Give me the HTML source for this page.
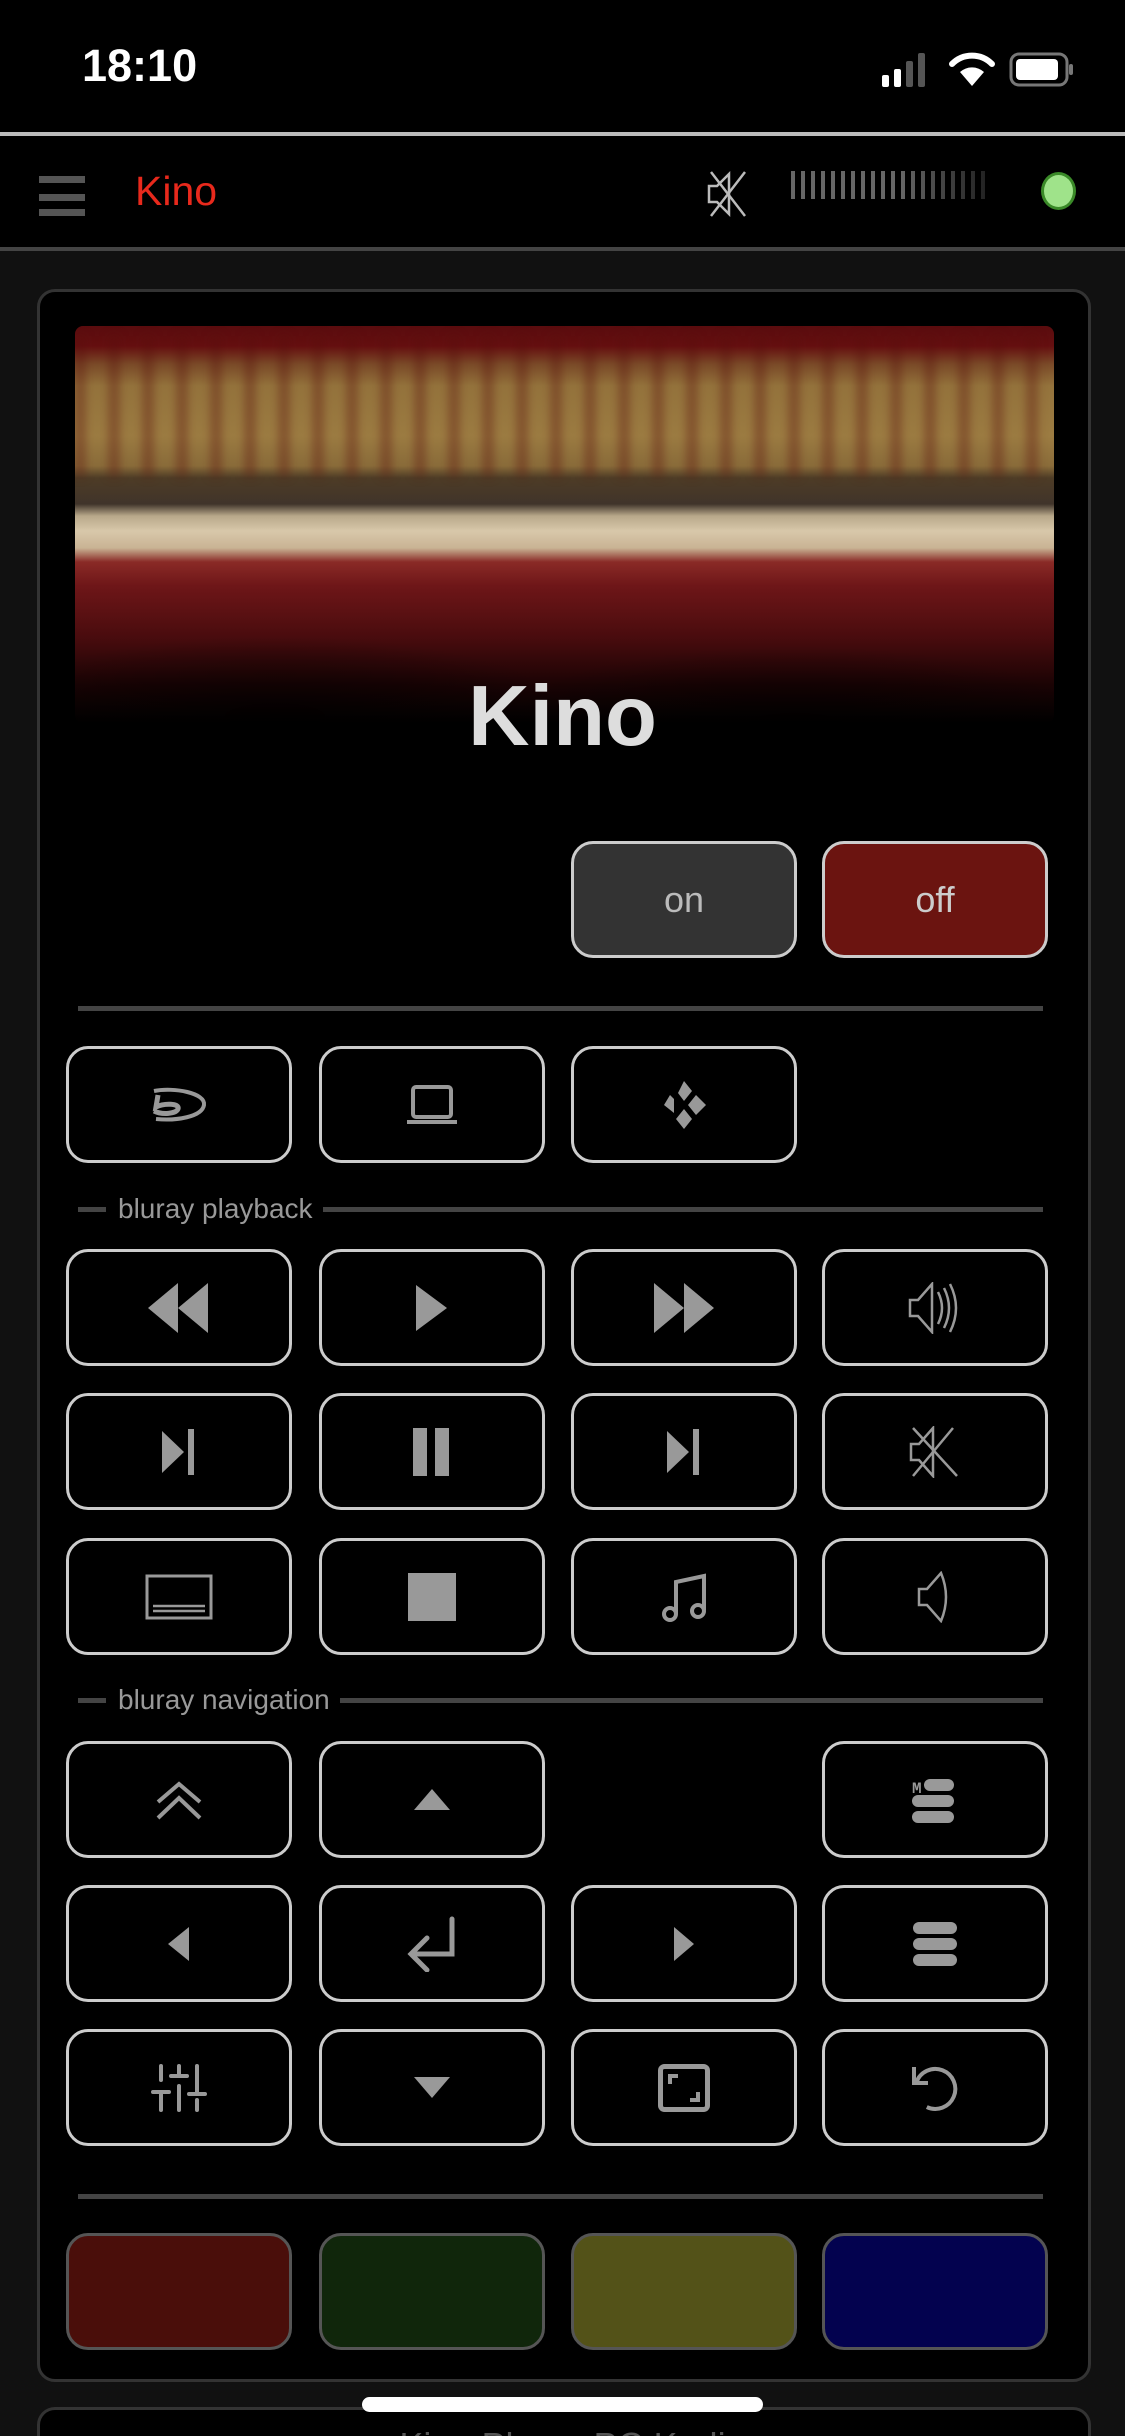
<!DOCTYPE html>
<html><head><meta charset="utf-8">
<style>
*{margin:0;padding:0;box-sizing:border-box}
html,body{width:1125px;height:2436px;overflow:hidden}
body{background:#111;position:relative;font-family:"Liberation Sans",sans-serif}
.a{position:absolute}
.btn{position:absolute;width:226px;height:117px;border:3px solid #ccc;border-radius:22px;background:#000;display:flex;align-items:center;justify-content:center}
.btn svg{display:block}
.cb{position:absolute;width:226px;height:117px;border:3px solid #555;border-radius:22px}
.lbl{position:absolute;left:78px;width:965px;height:30px;color:#999;font-size:28px;display:flex;align-items:center}
.lbl .d{width:28px;height:5px;background:#444;margin-right:12px}
.lbl .l{flex:1;height:5px;background:#444;margin-left:10px}
</style></head><body>
<div class="a" style="left:0;top:0;width:1125px;height:134px;background:#000"></div>
<div class="a" style="left:82px;top:40px;color:#fff;font-size:45px;font-weight:600">18:10</div>
<svg class="a" style="left:880px;top:50px" width="200" height="40" viewBox="0 0 200 40">
<rect x="2" y="25" width="7" height="12" rx="2" fill="#fff"/>
<rect x="14" y="19" width="7" height="18" rx="2" fill="#fff"/>
<rect x="26" y="11" width="7" height="26" rx="2" fill="#555"/>
<rect x="38" y="3" width="7" height="34" rx="2" fill="#555"/>
<path d="M92 36 L80 22 A18 18 0 0 1 104 22 Z" fill="#fff"/>
<path d="M72 14 A28 28 0 0 1 112 14" stroke="#fff" stroke-width="6" fill="none" stroke-linecap="round"/>
<rect x="131" y="4" width="56" height="31" rx="8" fill="none" stroke="#777" stroke-width="3"/>
<rect x="136" y="9" width="42" height="21" rx="4" fill="#fff"/>
<rect x="189" y="14" width="4" height="11" rx="2" fill="#777"/>
</svg>
<div class="a" style="left:0;top:132px;width:1125px;height:4px;background:#bbb"></div>
<div class="a" style="left:0;top:136px;width:1125px;height:114px;background:#000"></div>
<div class="a" style="left:39px;top:176px;width:46px;height:7px;background:#555"></div>
<div class="a" style="left:39px;top:194px;width:46px;height:7px;background:#555"></div>
<div class="a" style="left:39px;top:209px;width:46px;height:7px;background:#555"></div>
<div class="a" style="left:135px;top:168px;color:#e8291c;font-size:41px">Kino</div>
<svg class="a" style="left:707px;top:170px" width="42" height="48" viewBox="0 0 42 48">
<g stroke="#bbb" stroke-width="2.5" fill="none"><path d="M2 16h8l12-12v40L10 32H2z"/><path d="M4 2 L38 46 M38 2 L4 46"/></g></svg>
<div class="a" style="left:791px;top:171px;width:198px;height:28px;background:repeating-linear-gradient(90deg,#666 0 4px,transparent 4px 10px)"></div>
<div class="a" style="left:900px;top:171px;width:90px;height:28px;background:linear-gradient(90deg,rgba(0,0,0,0),rgba(0,0,0,.7))"></div>
<div class="a" style="left:1041px;top:172px;width:35px;height:38px;border-radius:50%;background:#9fe38a;border:3px solid #3a8a28"></div>
<div class="a" style="left:0;top:247px;width:1125px;height:4px;background:#444"></div>
<div class="a" style="left:37px;top:289px;width:1054px;height:2093px;background:#000;border:3px solid #333;border-radius:18px"></div>
<div class="a" style="left:75px;top:326px;width:979px;height:397px;border-radius:8px;overflow:hidden;background:linear-gradient(180deg,#5a0c0e 0px,#650f10 20px,#7a4a28 38px,#94733c 60px,#9c7c42 110px,#8a6c3a 140px,#4e3c26 152px,#40342a 178px,#b8a88a 190px,#d8c8aa 205px,#c9b394 222px,#8a2a26 236px,#6e1618 260px,#4a0c0e 310px,#1a0304 360px,#000 397px)">
<div class="a" style="left:0;top:10px;width:979px;height:140px;background:repeating-linear-gradient(90deg,rgba(90,15,12,.45) 0 10px,rgba(0,0,0,0) 10px 34px);filter:blur(5px)"></div>
<div class="a" style="left:0;top:240px;width:979px;height:160px;background:radial-gradient(ellipse 300px 80px at 200px 150px,rgba(0,0,0,.6),transparent),radial-gradient(ellipse 300px 80px at 720px 160px,rgba(0,0,0,.6),transparent)"></div>
</div>
<div class="a" style="left:0;top:668px;width:1125px;text-align:center;color:#ddd;font-size:85px;font-weight:bold">Kino</div>
<div class="btn" style="left:571px;top:841px;background:#333;color:#bbb;font-size:36px">on</div>
<div class="btn" style="left:822px;top:841px;background:#6b1410;color:#ccc;font-size:36px">off</div>
<div class="a" style="left:78px;top:1006px;width:965px;height:5px;background:#444"></div>

<div class="btn" style="left:66px;top:1046px"><svg width="70" height="40" viewBox="0 0 70 40"><path d="M10 6 C30 2 62 8 60 20 C58 32 32 36 12 34" stroke="#999" stroke-width="4" fill="none"/><path d="M14 10 L12 22 C20 18 36 18 34 24 C32 29 18 30 10 26" stroke="#999" stroke-width="5" fill="none"/></svg></div>
<div class="btn" style="left:319px;top:1046px"><svg width="54" height="42" viewBox="0 0 54 42"><rect x="8" y="3" width="38" height="30" rx="3" stroke="#999" stroke-width="4" fill="none"/><path d="M2 36h50v4H2z" fill="#999"/></svg></div>
<div class="btn" style="left:571px;top:1046px"><svg width="52" height="52" viewBox="0 0 52 52"><path d="M26 2 L34 12 L26 22 L20 14z M38 16 L48 26 L38 36 L30 26z M26 30 L34 40 L26 50 L18 40z M12 16 L16 20 L16 34 L6 26z" fill="#999"/></svg></div>

<div class="lbl" style="top:1194px"><span class="d"></span>bluray playback<span class="l"></span></div>

<div class="btn" style="left:66px;top:1249px"><svg width="62" height="52" viewBox="0 0 62 52"><path d="M0 26 L30 1 V51z M30 26 L60 1 V51z" fill="#999"/></svg></div>
<div class="btn" style="left:319px;top:1249px"><svg width="32" height="46" viewBox="0 0 32 46"><path d="M0 0 L31 23 L0 46z" fill="#999"/></svg></div>
<div class="btn" style="left:571px;top:1249px"><svg width="62" height="52" viewBox="0 0 62 52"><path d="M1 1 L31 26 L1 51z M31 1 L61 26 L31 51z" fill="#999"/></svg></div>
<div class="btn" style="left:822px;top:1249px"><svg width="54" height="52" viewBox="0 0 54 52"><g stroke="#999" stroke-width="2.5" fill="none"><path d="M2 18h8l14-16v48L10 34H2z"/><path d="M30 10 Q38 26 30 42"/><path d="M36 6 Q46 26 36 46"/><path d="M42 2 Q54 26 42 50"/></g></svg></div>

<div class="btn" style="left:66px;top:1393px"><svg width="34" height="46" viewBox="0 0 34 46"><path d="M0 2 L22 23 L0 44z" fill="#999"/><rect x="26" y="0" width="6" height="46" fill="#999"/></svg></div>
<div class="btn" style="left:319px;top:1393px"><svg width="38" height="48" viewBox="0 0 38 48"><rect x="0" y="0" width="14" height="48" fill="#999"/><rect x="22" y="0" width="14" height="48" fill="#999"/></svg></div>
<div class="btn" style="left:571px;top:1393px"><svg width="34" height="46" viewBox="0 0 34 46"><path d="M0 2 L22 23 L0 44z" fill="#999"/><rect x="26" y="0" width="6" height="46" fill="#999"/></svg></div>
<div class="btn" style="left:822px;top:1393px"><svg width="52" height="52" viewBox="0 0 52 52"><g stroke="#999" stroke-width="2.5" fill="none"><path d="M2 18h8l14-16v48L10 34H2z"/><path d="M4 2 L48 50 M44 2 L4 50"/></g></svg></div>

<div class="btn" style="left:66px;top:1538px"><svg width="68" height="46" viewBox="0 0 68 46"><rect x="2" y="2" width="64" height="42" stroke="#999" stroke-width="3" fill="none"/><path d="M8 32h52M8 37h52" stroke="#999" stroke-width="2.5"/></svg></div>
<div class="btn" style="left:319px;top:1538px"><svg width="48" height="48" viewBox="0 0 48 48"><rect x="0" y="0" width="48" height="48" fill="#999"/></svg></div>
<div class="btn" style="left:571px;top:1538px"><svg width="48" height="50" viewBox="0 0 48 50"><g stroke="#999" stroke-width="4" fill="none"><path d="M16 42V10L44 4V38"/><circle cx="10" cy="42" r="6"/><circle cx="38" cy="39" r="6"/></g></svg></div>
<div class="btn" style="left:822px;top:1538px"><svg width="36" height="52" viewBox="0 0 36 52"><path d="M2 18h8l14-16 Q34 26 24 50L10 34H2z" stroke="#999" stroke-width="2.5" fill="none"/></svg></div>

<div class="lbl" style="top:1685px"><span class="d"></span>bluray navigation<span class="l"></span></div>

<div class="btn" style="left:66px;top:1741px"><svg width="46" height="40" viewBox="0 0 46 40"><path d="M2 22 L23 4 L44 22 M2 38 L23 18 L44 38" stroke="#999" stroke-width="4" fill="none"/></svg></div>
<div class="btn" style="left:319px;top:1741px"><svg width="36" height="22" viewBox="0 0 36 22"><path d="M18 0 L36 21 H0z" fill="#999"/></svg></div>
<div class="btn" style="left:822px;top:1741px"><svg width="46" height="46" viewBox="0 0 46 46"><text x="0" y="16" font-size="16" font-family="Liberation Mono" fill="#999" font-weight="bold">M</text><rect x="12" y="2" width="30" height="12" rx="6" fill="#999"/><rect x="0" y="18" width="42" height="12" rx="6" fill="#999"/><rect x="0" y="34" width="42" height="12" rx="6" fill="#999"/></svg></div>

<div class="btn" style="left:66px;top:1885px"><svg width="22" height="34" viewBox="0 0 22 34"><path d="M21 0 V34 L0 17z" fill="#999"/></svg></div>
<div class="btn" style="left:319px;top:1885px"><svg width="50" height="56" viewBox="0 0 50 56"><g stroke="#999" stroke-width="5" fill="none" stroke-linecap="round"><path d="M45 3 V38 H6"/><path d="M20 22 L4 38 L20 54"/></g></svg></div>
<div class="btn" style="left:571px;top:1885px"><svg width="22" height="34" viewBox="0 0 22 34"><path d="M1 0 V34 L21 17z" fill="#999"/></svg></div>
<div class="btn" style="left:822px;top:1885px"><svg width="44" height="44" viewBox="0 0 44 44"><rect x="0" y="0" width="44" height="12" rx="6" fill="#999"/><rect x="0" y="16" width="44" height="12" rx="6" fill="#999"/><rect x="0" y="32" width="44" height="12" rx="6" fill="#999"/></svg></div>

<div class="btn" style="left:66px;top:2029px"><svg width="56" height="48" viewBox="0 0 56 48"><g stroke="#999" stroke-width="4" stroke-linecap="round"><path d="M10 2V16M10 28V46M2 28H18M28 2V12M20 12H36M28 22V46M46 2V30M46 36V46M38 30H54"/></g></svg></div>
<div class="btn" style="left:319px;top:2029px"><svg width="36" height="22" viewBox="0 0 36 22"><path d="M0 0 H36 L18 21z" fill="#999"/></svg></div>
<div class="btn" style="left:571px;top:2029px"><svg width="52" height="48" viewBox="0 0 52 48"><rect x="2.5" y="2.5" width="47" height="43" rx="4" stroke="#999" stroke-width="5" fill="none"/><path d="M12 20V12H20M40 28V36H32" stroke="#999" stroke-width="4" fill="none"/></svg></div>
<div class="btn" style="left:822px;top:2029px"><svg width="50" height="50" viewBox="0 0 50 50"><path d="M8 16 A20 20 0 1 1 14 42" stroke="#999" stroke-width="4" fill="none" transform="rotate(-10 27 27)"/><path d="M4 4 V20 H18" stroke="#999" stroke-width="4" fill="none"/></svg></div>

<div class="a" style="left:78px;top:2194px;width:965px;height:5px;background:#444"></div>

<div class="cb" style="left:66px;top:2233px;background:#4a0e0a"></div>
<div class="cb" style="left:319px;top:2233px;background:#10260b"></div>
<div class="cb" style="left:571px;top:2233px;background:#535218"></div>
<div class="cb" style="left:822px;top:2233px;background:#03024f"></div>

<div class="a" style="left:0;top:2405px;width:1125px;height:31px;overflow:hidden">
<div class="a" style="left:37px;top:2px;width:1054px;height:100px;background:#000;border:3px solid #333;border-radius:18px"></div>
<div class="a" style="left:0;top:20px;width:1125px;text-align:center;color:#555;font-size:36px">Kino Player PC Kodi</div>
</div>
<div class="a" style="left:362px;top:2397px;width:401px;height:15px;background:#fff;border-radius:8px"></div>
</body></html>
